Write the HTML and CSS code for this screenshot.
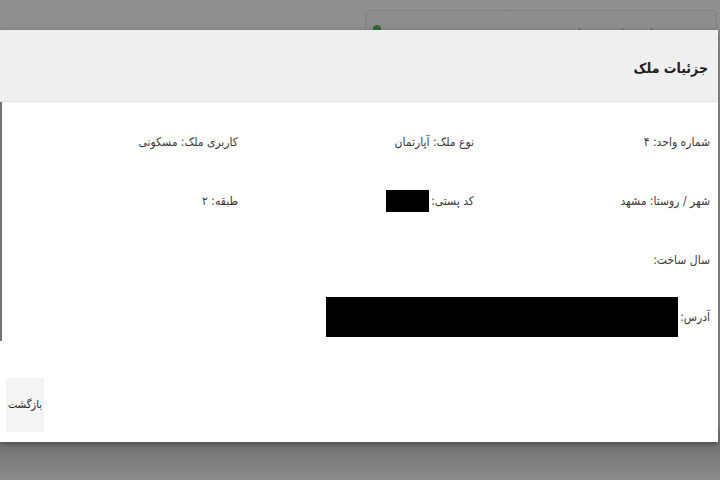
FILE: index.html
```html
<!DOCTYPE html>
<html lang="fa" dir="rtl">
<head>
<meta charset="utf-8">
<title>جزئیات ملک</title>
<link rel="stylesheet" href="styles.css">
</head>
<body>
<div class="page">
  <div class="bg-card">
    <span class="dot"></span>
    <span class="tick t1"></span>
    <span class="tick t2"></span>
    <span class="tick t3"></span>
  </div>
</div>
<div class="modal">
  <div class="modal-header">
    <h2 class="modal-title">جزئیات ملک</h2>
  </div>
  <div class="modal-body">
    <div class="grid">
      <div class="cell">شماره واحد: ۴</div>
      <div class="cell">نوع ملک: آپارتمان</div>
      <div class="cell">کاربری ملک: مسکونی</div>
      <div class="cell">شهر / روستا: مشهد</div>
      <div class="cell">کد پستی:<span class="redact postal"></span></div>
      <div class="cell">طبقه: ۲</div>
      <div class="cell">سال ساخت:</div>
      <div class="cell"></div>
      <div class="cell"></div>
      <div class="cell full">آدرس:<span class="redact address"></span></div>
    </div>
  </div>
  <div class="modal-footer">
    <button class="btn-back">بازگشت</button>
  </div>
</div>
</body>
</html>
```
FILE: styles.css
```css
html, body {
  margin: 0;
  padding: 0;
  width: 720px;
  height: 480px;
  overflow: hidden;
}
body {
  background: linear-gradient(to bottom, #8f8f8f 0%, #8c8c8c 88%, #717171 92%, #8a8a8a 100%);
  font-family: "DejaVu Sans Condensed", "DejaVu Sans", sans-serif;
  font-stretch: condensed;
  position: relative;
}
.page {
  padding: 10px 3px 0 0;
  display: flex;
  justify-content: flex-start;
}
.bg-card {
  width: 350px;
  height: 60px;
  border: 1px solid #7f7f7f;
  border-radius: 4px;
  background: #8d8d8d;
  position: relative;
}
.dot {
  position: absolute;
  left: 7px;
  top: 14px;
  width: 8px;
  height: 8px;
  border-radius: 50%;
  background: #2f6b2f;
}
.tick {
  position: absolute;
  top: 17px;
  width: 1px;
  height: 6px;
  background: #555;
}
.t1 { left: 213px; }
.t2 { left: 256px; }
.t3 { left: 285px; }
.modal {
  position: absolute;
  top: 30px;
  left: 0;
  width: 718px;
  height: 412px;
  background: #fff;
  display: flex;
  flex-direction: column;
  box-shadow: 0 2px 6px rgba(0,0,0,0.35);
}
.modal-header {
  height: 72px;
  background: #efefef;
  border-bottom: 1px solid #e4e4e4;
  display: flex;
  align-items: center;
  padding: 0 10px;
  box-sizing: border-box;
}
.modal-title {
  margin: 5px 0 0;
  font-size: 14px;
  font-weight: bold;
  color: #1e1e1e;
}
.modal-body {
  height: 239px;
  border-left: 2px solid #737373;
  box-sizing: border-box;
  padding: 30px 8px 0 0;
}
.grid {
  display: grid;
  grid-template-columns: 236px 236px 236px;
  grid-auto-rows: 59px;
  align-items: start;
}
.cell {
  font-size: 12px;
  color: #3a3a3a;
  line-height: 20px;
  height: 20px;
  display: flex;
  align-items: center;
  white-space: nowrap;
}
.cell.full {
  grid-column: 1 / 4;
  height: 40px;
  line-height: 40px;
  margin-top: -12px;
}
.redact {
  display: inline-block;
  background: #000;
  margin-right: 2px;
}
.postal {
  width: 43px;
  height: 22px;
}
.address {
  width: 352px;
  height: 40px;
}
.modal-footer {
  flex: 1;
  display: flex;
  align-items: center;
  justify-content: flex-end;
  padding: 0 6px;
}
.btn-back {
  width: 38px;
  height: 54px;
  border: none;
  background: #f4f4f4;
  font-family: inherit;
  font-size: 11px;
  color: #222;
  padding: 0;
  margin-top: 26px;
}
```
